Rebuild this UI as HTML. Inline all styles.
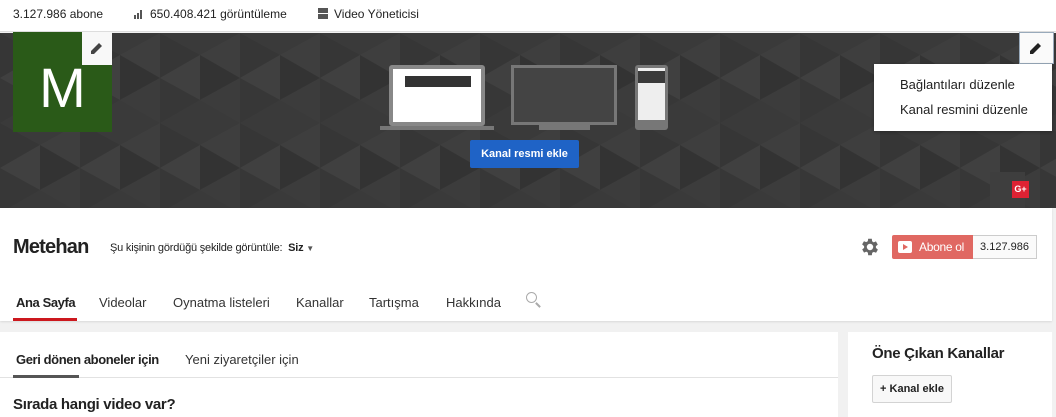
<!DOCTYPE html>
<html><head><meta charset="utf-8"><style>
*{margin:0;padding:0;box-sizing:border-box}
body{width:1056px;height:417px;overflow:hidden;background:#f1f1f1;font-family:"Liberation Sans",Arial,sans-serif;color:#222;position:relative}
.a{position:absolute}
</style></head><body>
<div class="a" style="left:0;top:0;width:1056px;height:32px;background:#fff;border-bottom:1px solid #ddd"></div>
<div class="a" style="left:13px;top:7px;font-size:12px">3.127.986 abone</div>
<svg class="a" style="left:134px;top:10px" width="10" height="9"><rect x="0" y="5" width="2" height="4" fill="#555"/><rect x="3" y="3" width="2" height="6" fill="#555"/><rect x="6" y="0" width="2" height="9" fill="#555"/></svg>
<div class="a" style="left:150px;top:7px;font-size:12px">650.408.421 görüntüleme</div>
<svg class="a" style="left:318px;top:8px" width="10" height="11"><rect x="0" y="0" width="10" height="5" fill="#555"/><rect x="0" y="6" width="10" height="5" fill="#555"/></svg>
<div class="a" style="left:334px;top:7px;font-size:12px">Video Yöneticisi</div>

<svg class="a" style="left:0;top:33px" width="1056" height="175">
<defs><pattern id="p" width="80" height="90" patternUnits="userSpaceOnUse">
<rect width="80" height="90" fill="#3a3a3a"/>
<polygon points="0,0 40,22 0,45" fill="#363636"/>
<polygon points="40,22 80,0 80,45" fill="#3e3e3e"/>
<polygon points="0,45 40,22 40,67" fill="#404040"/>
<polygon points="40,22 80,45 40,67" fill="#333"/>
<polygon points="0,45 40,67 0,90" fill="#373737"/>
<polygon points="40,67 80,45 80,90" fill="#3c3c3c"/>
</pattern></defs>
<rect width="1056" height="175" fill="url(#p)"/>
</svg>
<div class="a" style="left:13px;top:32px;width:99px;height:100px;background:#2a5a18;color:#fff;font-size:56px;text-align:center;line-height:112px">M</div>
<div class="a" style="left:82px;top:32px;width:30px;height:33px;background:#f8f8f8"></div>
<svg class="a" style="left:91px;top:42px" width="12" height="12"><path d="M0 12 L0 9 L8 1 L11 4 L3 12 Z" fill="#444"/></svg>

<div class="a" style="left:389px;top:65px;width:96px;height:61px;background:#888;border-radius:3px"></div>
<div class="a" style="left:393px;top:69px;width:88px;height:53px;background:#fff"></div>
<div class="a" style="left:405px;top:76px;width:66px;height:11px;background:#333"></div>
<div class="a" style="left:380px;top:126px;width:114px;height:4px;background:#777"></div>
<div class="a" style="left:511px;top:65px;width:106px;height:60px;background:#444;border:3px solid #777"></div>
<div class="a" style="left:539px;top:125px;width:51px;height:5px;background:#777"></div>
<div class="a" style="left:635px;top:65px;width:33px;height:65px;background:#777;border-radius:3px"></div>
<div class="a" style="left:638px;top:68px;width:27px;height:52px;background:#eee"></div>
<div class="a" style="left:638px;top:71px;width:27px;height:12px;background:#3a3a3a"></div>
<div class="a" style="left:470px;top:140px;width:109px;height:28px;background:#1f63c6;color:#fff;font-size:11px;font-weight:bold;text-align:center;line-height:28px;border-radius:2px">Kanal resmi ekle</div>

<div class="a" style="left:1019px;top:32px;width:35px;height:32px;background:#fafafa;border:1px solid #9ab"></div>
<svg class="a" style="left:1030px;top:42px" width="12" height="12"><path d="M0 12 L0 9 L8 1 L11 4 L3 12 Z" fill="#222"/></svg>
<div class="a" style="left:874px;top:64px;width:178px;height:67px;background:#fff;box-shadow:0 1px 3px rgba(0,0,0,.3)"></div>
<div class="a" style="left:900px;top:77px;font-size:13px">Bağlantıları düzenle</div>
<div class="a" style="left:900px;top:102px;font-size:13px">Kanal resmini düzenle</div>
<div class="a" style="left:990px;top:172px;width:35px;height:36px;background:#3e3e3e"></div>
<div class="a" style="left:1012px;top:181px;width:17px;height:17px;background:#d23;color:#fff;font-size:9px;font-weight:bold;text-align:center;line-height:17px">G+</div>

<div class="a" style="left:0;top:208px;width:1052px;height:113px;background:#fff;box-shadow:0 1px 2px rgba(0,0,0,.1)"></div>
<div class="a" style="left:13px;top:236px;font-size:20px;font-weight:bold;letter-spacing:-.8px">Metehan</div>
<div class="a" style="left:110px;top:242px;font-size:11px;letter-spacing:-.2px">Şu kişinin gördüğü şekilde görüntüle: &nbsp;<b>Siz</b> <span style="font-size:8px;color:#555">▼</span></div>
<svg class="a" style="left:859px;top:236px" width="22" height="22" viewBox="0 0 24 24"><path fill="#666" d="M19.4 13a7.5 7.5 0 000-2l2.1-1.6-2-3.5-2.5 1a7.3 7.3 0 00-1.7-1L15 3h-4l-.4 2.7a7.3 7.3 0 00-1.7 1l-2.5-1-2 3.5L6.6 11a7.5 7.5 0 000 2l-2.1 1.6 2 3.5 2.5-1a7.3 7.3 0 001.7 1L11 21h4l.4-2.7a7.3 7.3 0 001.7-1l2.5 1 2-3.5zM13 15.5a3.5 3.5 0 110-7 3.5 3.5 0 010 7z" transform="translate(-1 0)"/></svg>
<div class="a" style="left:892px;top:235px;width:81px;height:24px;background:#e06862;border-radius:2px 0 0 2px;color:#fff;font-size:12px;line-height:24px"><span class="a" style="left:6px;top:6px;width:14px;height:12px;background:#fff;border-radius:2px"></span><span class="a" style="left:11px;top:9px;border-left:5px solid #e06862;border-top:3px solid transparent;border-bottom:3px solid transparent"></span><span style="margin-left:27px;letter-spacing:-.3px">Abone ol</span></div>
<div class="a" style="left:973px;top:235px;width:64px;height:24px;border:1px solid #ccc;border-left:0;background:#fafafa;font-size:11px;line-height:22px;text-align:center">3.127.986</div>

<div class="a" style="left:16px;top:295px;font-size:13px;font-weight:bold;letter-spacing:-.4px">Ana Sayfa</div>
<div class="a" style="left:13px;top:318px;width:64px;height:3px;background:#cc181e"></div>
<div class="a" style="left:99px;top:295px;font-size:13px;color:#333">Videolar</div>
<div class="a" style="left:173px;top:295px;font-size:13px;color:#333">Oynatma listeleri</div>
<div class="a" style="left:296px;top:295px;font-size:13px;color:#333">Kanallar</div>
<div class="a" style="left:369px;top:295px;font-size:13px;color:#333">Tartışma</div>
<div class="a" style="left:446px;top:295px;font-size:13px;color:#333">Hakkında</div>
<div class="a" style="left:526px;top:292px;width:11px;height:11px;border:1.5px solid #aaa;border-radius:50%"></div>
<div class="a" style="left:535px;top:304px;width:6px;height:2px;background:#aaa;transform:rotate(45deg)"></div>

<div class="a" style="left:0;top:332px;width:838px;height:85px;background:#fff"></div>
<div class="a" style="left:16px;top:352px;font-size:13px;font-weight:bold;letter-spacing:-.4px">Geri dönen aboneler için</div>
<div class="a" style="left:185px;top:352px;font-size:13px;color:#333">Yeni ziyaretçiler için</div>
<div class="a" style="left:0;top:377px;width:838px;height:1px;background:#e2e2e2"></div>
<div class="a" style="left:13px;top:375px;width:66px;height:3px;background:#555"></div>
<div class="a" style="left:13px;top:396px;font-size:15px;font-weight:bold;letter-spacing:-.3px">Sırada hangi video var?</div>

<div class="a" style="left:848px;top:332px;width:204px;height:85px;background:#fff"></div>
<div class="a" style="left:872px;top:345px;font-size:15px;font-weight:bold;letter-spacing:-.3px">Öne Çıkan Kanallar</div>
<div class="a" style="left:872px;top:375px;width:80px;height:28px;background:#f8f8f8;border:1px solid #d3d3d3;border-radius:2px;font-size:11px;font-weight:bold;line-height:26px;text-align:center">+ Kanal ekle</div>
</body></html>
